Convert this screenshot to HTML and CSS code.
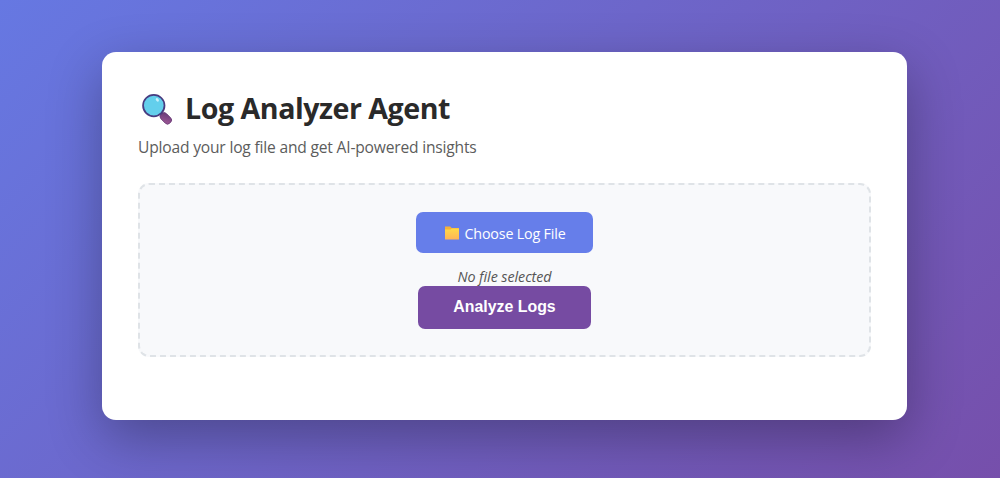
FILE: index.html
```html
<!DOCTYPE html>
<html lang="en">
<head>
    <meta charset="UTF-8">
    <meta name="viewport" content="width=device-width, initial-scale=1.0">
    <title>Log Analyzer Agent</title>
    <link rel="stylesheet" href="styles.css">
</head>
<body>
    <div class="container">
        <h1>
            <svg class="icon-search" viewBox="0 0 32 32" aria-hidden="true">
                <defs>
                    <linearGradient id="handle" x1="0" y1="0" x2="1" y2="1">
                        <stop offset="0" stop-color="#643a76"/>
                        <stop offset="1" stop-color="#a25a98"/>
                    </linearGradient>
                </defs>
                <path d="M19.5 19.5l3 3" stroke="#50366f" stroke-width="2.6"/>
                <rect x="-6" y="-3.7" width="12" height="7.4" rx="3.2" fill="url(#handle)" stroke="#6b3d78" stroke-width=".8" transform="translate(24.1 24.6) rotate(45)"/>
                <circle cx="12.4" cy="12.2" r="10.4" fill="#63cfec" stroke="#483c80" stroke-width="1.7"/>
                <ellipse cx="15.8" cy="6.6" rx="1.3" ry="1.9" fill="#c7f1fc" transform="rotate(-35 15.8 6.6)"/>
            </svg>
            <span>Log Analyzer Agent</span>
        </h1>
        <p class="subtitle">Upload your log file and get AI-powered insights</p>

        <div class="upload-section">
            <input type="file" id="logFile" accept=".log,.txt" hidden>
            <label for="logFile" class="file-label">
                <svg class="icon-folder" viewBox="0 0 16 14" aria-hidden="true">
                    <defs>
                        <linearGradient id="folder" x1="0" y1="0" x2="0" y2="1">
                            <stop offset="0" stop-color="#ffda48"/>
                            <stop offset="1" stop-color="#ffb457"/>
                        </linearGradient>
                    </defs>
                    <path d="M1 .5h5.2l1.5 1.5H15v3H1z" fill="#f5b13a"/>
                    <path d="M1 3.6h5.5l1.2-1.1H15v11H1z" fill="url(#folder)"/>
                </svg>
                <span>Choose Log File</span>
            </label>
            <span class="file-name" id="fileName">No file selected</span>
            <button class="analyze-btn" id="analyzeBtn">Analyze Logs</button>
        </div>
    </div>

    <script>
        const logFile = document.getElementById('logFile');

        // Show the name of the chosen file
        logFile.addEventListener('change', () => {
            const file = logFile.files[0];
            document.getElementById('fileName').textContent = file ? file.name : 'No file selected';
        });
    </script>
</body>
</html>
```
FILE: styles.css
```css
* {
    margin: 0;
    padding: 0;
    box-sizing: border-box;
}
body {
    font-family: "Segoe UI", "Open Sans", sans-serif;
    background: linear-gradient(135deg, #6678e2 0%, #764fab 100%);
    min-height: 478px;
    padding: 52px 93px 58px 102px;
}
.container {
    height: 368px;
    padding: 36px;
    background: white;
    border-radius: 14px;
    box-shadow: 0 18px 54px rgba(0,0,0,0.3);
}
h1 {
    display: flex;
    align-items: center;
    gap: 11px;
    height: 40px;
    padding-left: 3px;
    color: #2a2a2a;
    font-size: 28.6px;
    letter-spacing: -0.47px;
    line-height: 40px;
    white-space: nowrap;
}
.icon-search {
    width: 33px;
    height: 33px;
    margin-top: 3px;
}
.subtitle {
    margin: 7px 0 24px;
    color: #5c5c5c;
    font-size: 15.6px;
    letter-spacing: -0.19px;
    line-height: 24px;
}
.upload-section {
    display: flex;
    flex-direction: column;
    align-items: center;
    height: 174px;
    padding-top: 27px;
    background: #f8f9fb;
    border: 2px dashed #dfe3e7;
    border-radius: 11px;
}
.file-label {
    display: flex;
    align-items: center;
    justify-content: center;
    gap: 5px;
    width: 177px;
    height: 41px;
    padding-top: 1px;
    background: #667eea;
    color: white;
    border-radius: 7px;
    font-size: 14.3px;
    letter-spacing: -0.18px;
    cursor: pointer;
}
.icon-folder {
    width: 16px;
    height: 14px;
}
.file-name {
    margin-top: 14px;
    color: #555;
    font-size: 14.3px;
    font-style: italic;
    letter-spacing: -0.05px;
    line-height: 19px;
}
.analyze-btn {
    width: 173px;
    height: 43px;
    padding-bottom: 1px;
    background: #764ba2;
    color: white;
    border: none;
    border-radius: 7px;
    font-family: "Liberation Sans", Arial, sans-serif;
    font-size: 15.9px;
    font-weight: bold;
    cursor: pointer;
}
```
